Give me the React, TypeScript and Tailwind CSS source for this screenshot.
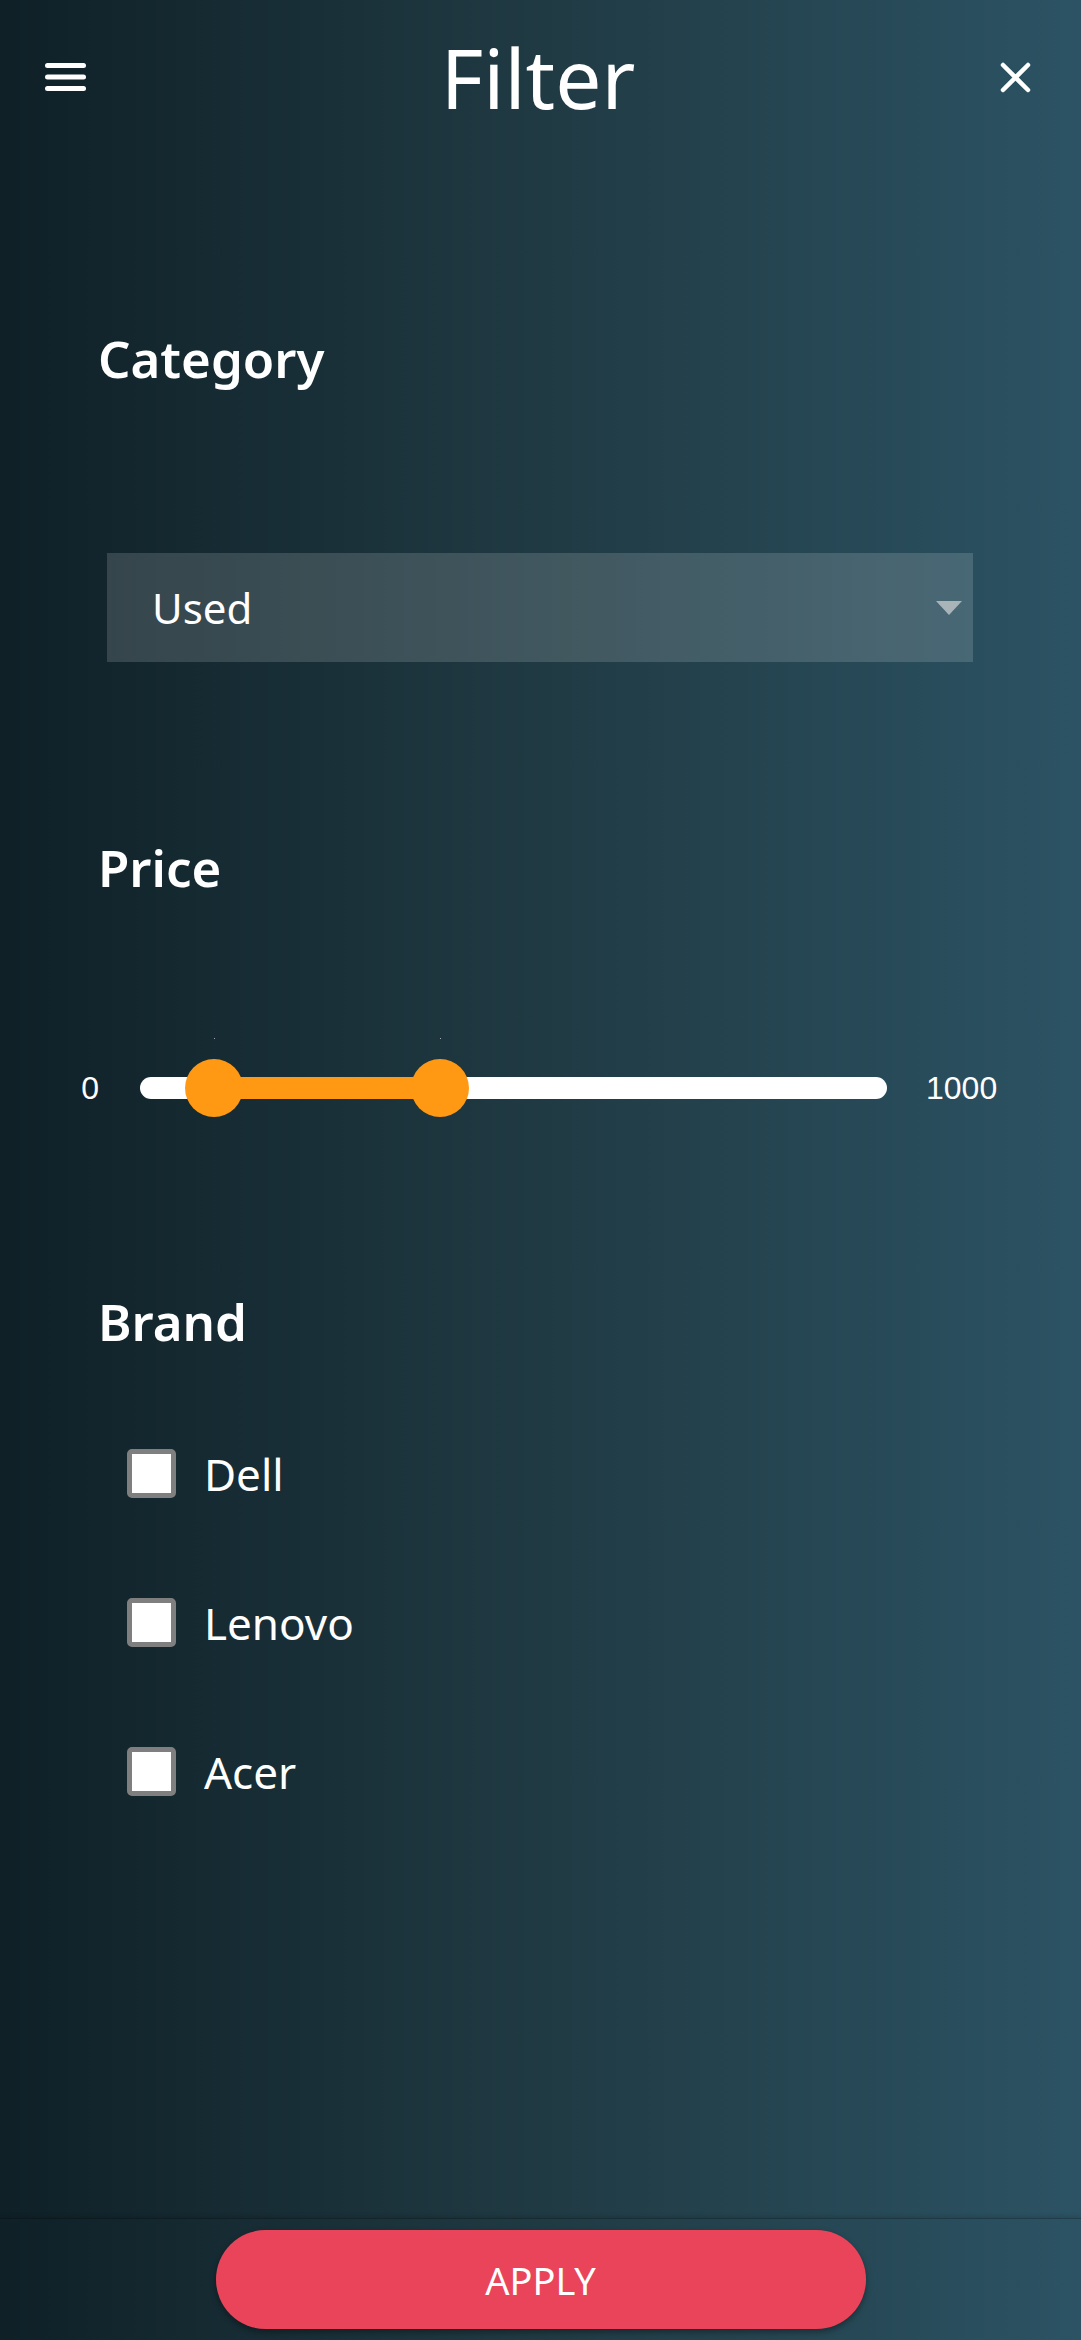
import React from "react";

const font = { fontFamily: '"Noto Sans", "Open Sans", sans-serif' };

function Hamburger() {
  return (
    <svg width="41" height="28" viewBox="0 0 41 28" fill="none">
      <rect x="0" y="0" width="41" height="5" rx="2.5" fill="white" />
      <rect x="0" y="11.5" width="41" height="5" rx="2.5" fill="white" />
      <rect x="0" y="23" width="41" height="5" rx="2.5" fill="white" />
    </svg>
  );
}

function CloseIcon() {
  return (
    <svg width="31" height="31" viewBox="0 0 31 31" fill="none">
      <path d="M3 3 L28 28 M28 3 L3 28" stroke="white" strokeWidth="4.5" strokeLinecap="round" />
    </svg>
  );
}

function Checkbox() {
  return <div className="w-[49px] h-[49px] rounded-[5px] border-[5px] border-[#7f7f7f] bg-white shrink-0" />;
}

export default function App() {
  const brands = ["Dell", "Lenovo", "Acer"];
  return (
    <div
      className="w-[1081px] h-[2340px] flex flex-col text-white bg-[linear-gradient(to_right,#0f2027,#203a43,#2c5364)] overflow-hidden"
      style={font}
    >
      <div className="flex-1 flex flex-col">
        {/* Header */}
        <div className="flex items-center pt-[36px] pl-[45px] pr-[50px]">
          <div className="flex-1 flex items-center">
            <Hamburger />
          </div>
          <div className="text-[82px] leading-none font-normal">Filter</div>
          <div className="flex-1 flex items-center justify-end">
            <CloseIcon />
          </div>
        </div>

        {/* Category */}
        <div className="mt-[215px] pl-[98px] text-[51px] leading-none font-semibold">Category</div>
        <div className="mt-[169px] ml-[107px] w-[866px] h-[109px] bg-white/[0.15] flex items-center justify-between pl-[45px] pr-[11px]">
          <span className="text-[42px] leading-none">Used</span>
          <svg width="26" height="14" viewBox="0 0 26 14">
            <path d="M0 0 L26 0 L13 14 Z" fill="#a9b4b9" />
          </svg>
        </div>

        {/* Price */}
        <div className="mt-[180px] pl-[98px] text-[51px] leading-none font-semibold">Price</div>
        <div
          className="mt-[165px] h-[60px] flex items-center"
          style={{ fontFamily: '"Liberation Sans", Arial, sans-serif' }}
        >
          <div className="w-[140px] pr-[41px] text-right text-[32px] leading-none">0</div>
          <div className="relative w-[747px] h-[22px] rounded-full bg-white">
            <div className="absolute left-[74px] w-[226px] top-0 h-[22px] bg-[#ff9914]" />
            <div className="absolute left-[45px] top-[-18px] w-[58px] h-[58px] rounded-full bg-[#ff9914]" />
            <div className="absolute left-[271px] top-[-18px] w-[58px] h-[58px] rounded-full bg-[#ff9914]" />
            <div className="absolute left-[74px] top-[-39px] w-[1px] h-[1px] bg-white/60" />
            <div className="absolute left-[300px] top-[-39px] w-[1px] h-[1px] bg-white/60" />
          </div>
          <div className="pl-[39px] text-[32px] leading-none">1000</div>
        </div>

        {/* Brand */}
        <div className="mt-[178px] pl-[98px] text-[51px] leading-none font-semibold">Brand</div>
        <div className="mt-[102px] ml-[127px] flex flex-col gap-[100px]">
          {brands.map((b) => (
            <div key={b} className="flex items-center gap-[28px]">
              <Checkbox />
              <span className="text-[44px] leading-none">{b}</span>
            </div>
          ))}
        </div>
      </div>

      {/* Bottom bar */}
      <div className="h-[122px] border-t border-black/25 shadow-[0_-2px_4px_rgba(0,0,0,0.12)] pt-[11px]">
        <button className="mx-auto flex items-center justify-center w-[650px] h-[99px] rounded-full bg-[#ea445a] shadow-[0_3px_6px_rgba(0,0,0,0.35)] text-[38px] leading-none text-white">
          APPLY
        </button>
      </div>
    </div>
  );
}
